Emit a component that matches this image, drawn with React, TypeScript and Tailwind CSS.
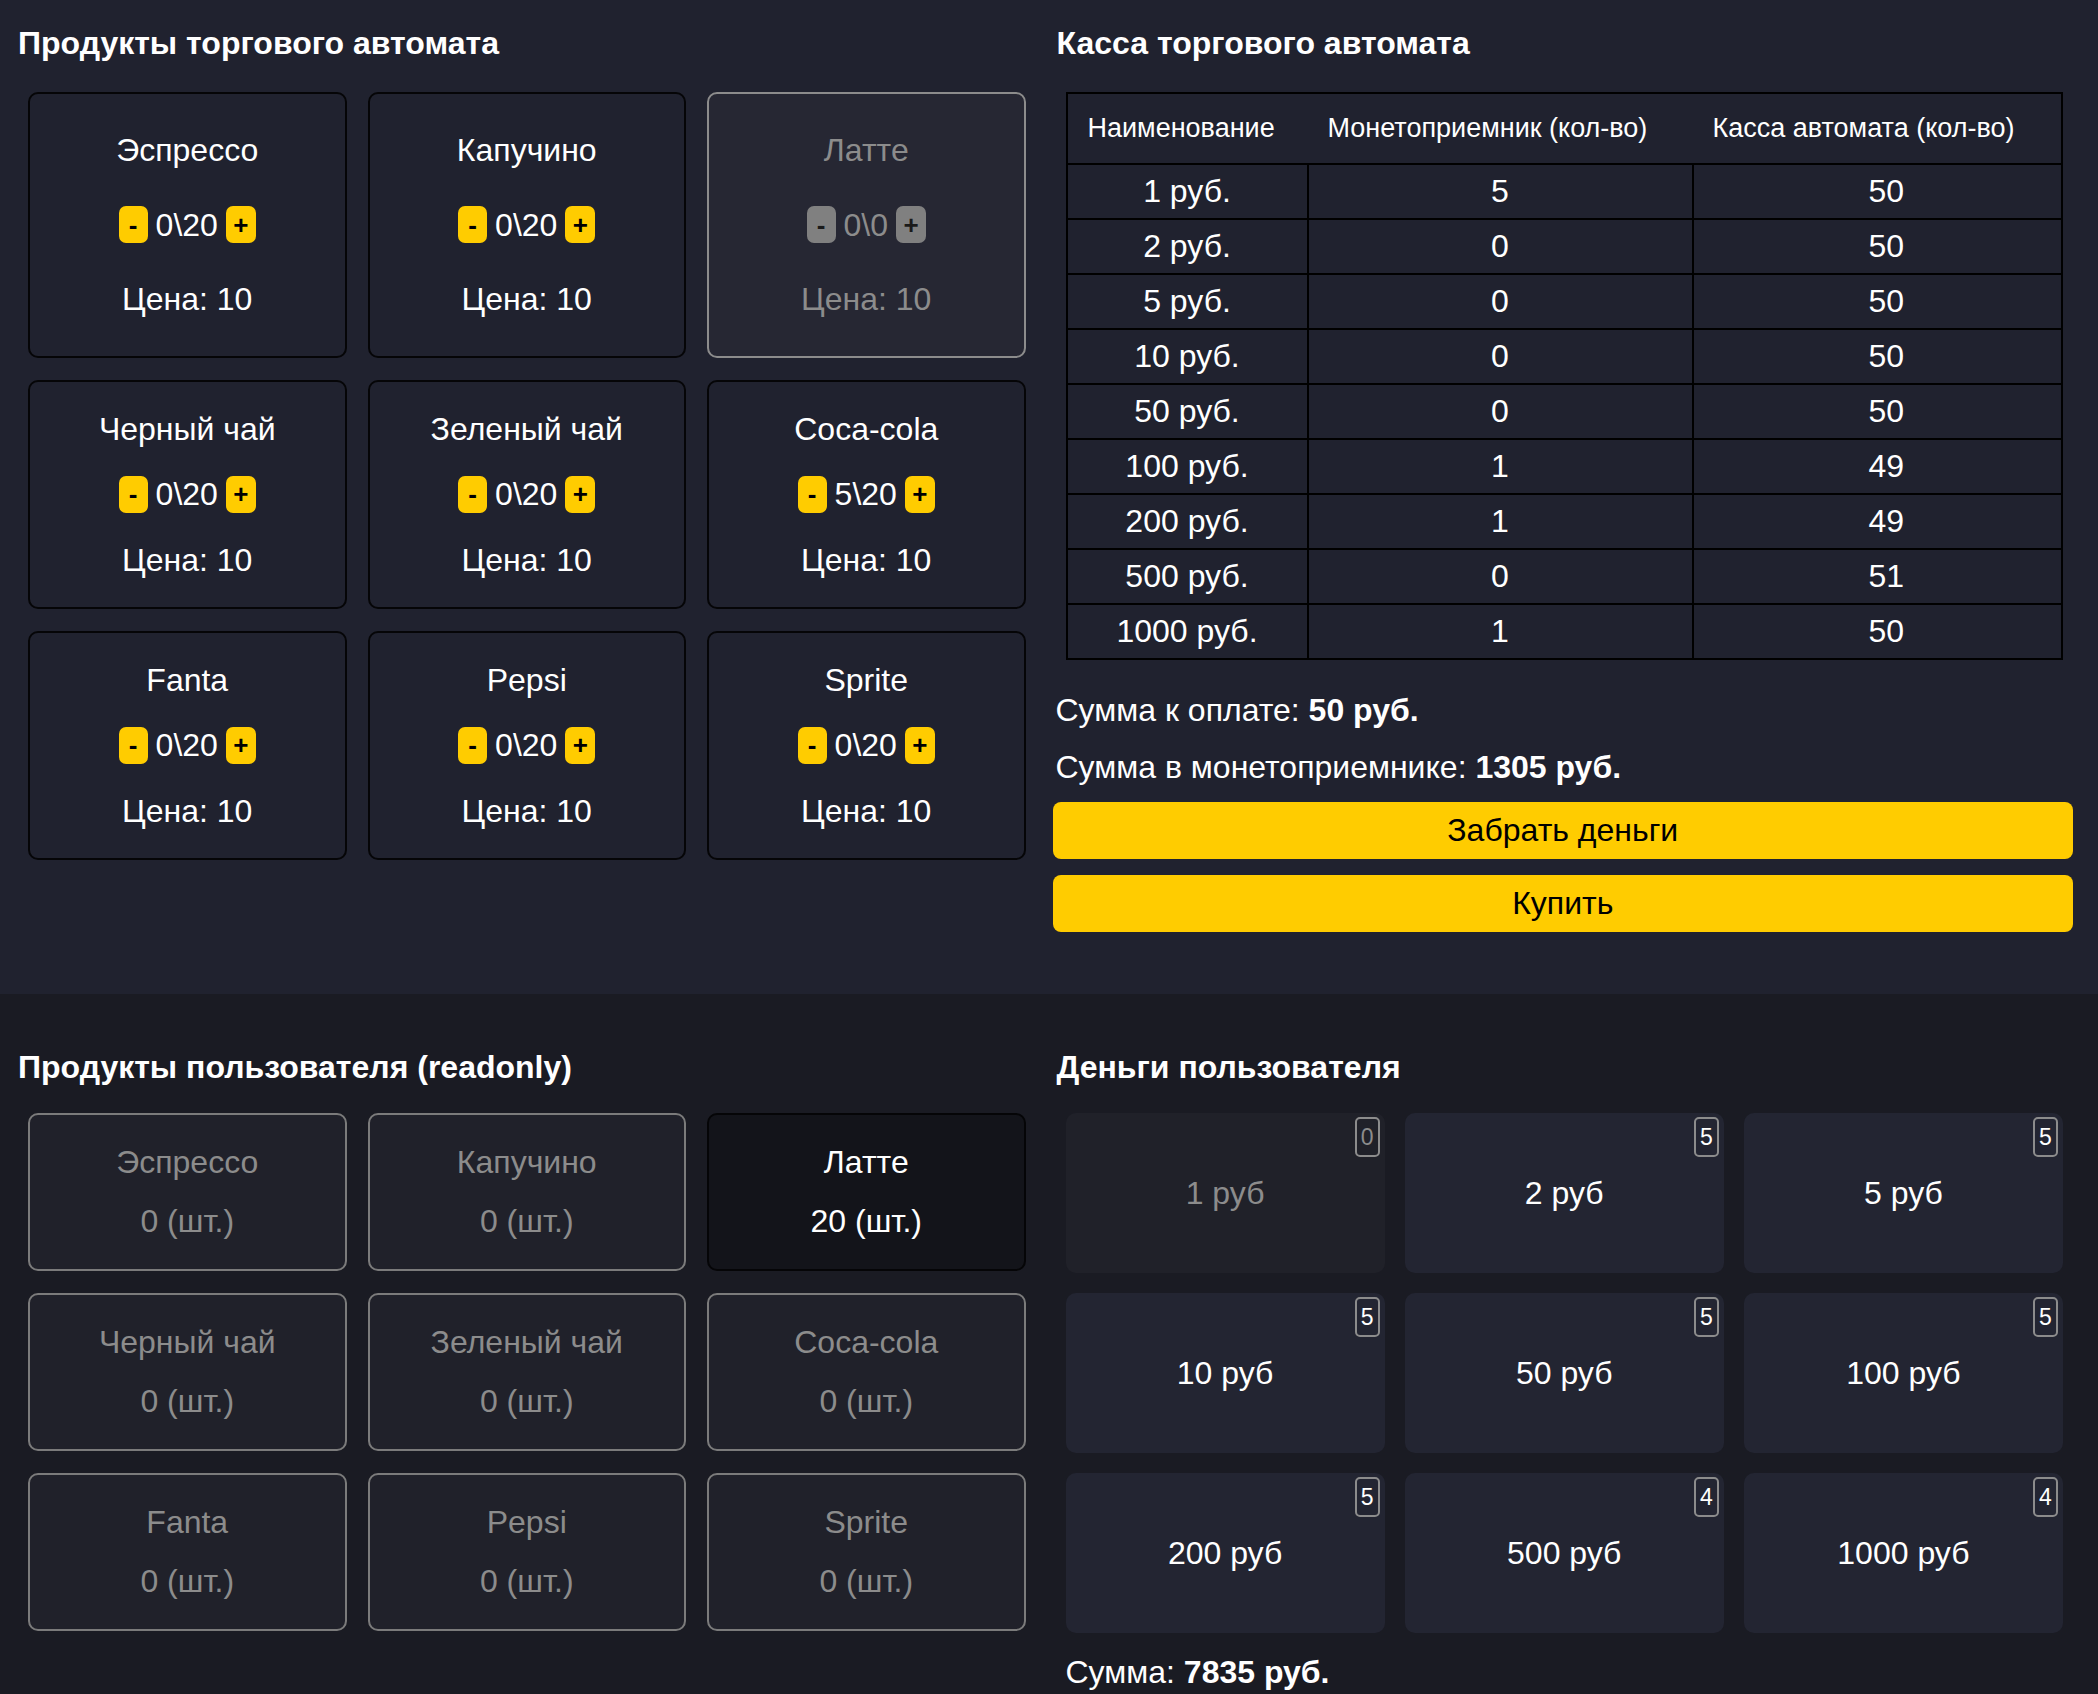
import React from 'react';

type Product = { name: string; count: number; max: number; price: number; owned: number };

const products: Product[] = [
  { name: 'Эспрессо', count: 0, max: 20, price: 10, owned: 0 },
  { name: 'Капучино', count: 0, max: 20, price: 10, owned: 0 },
  { name: 'Латте', count: 0, max: 0, price: 10, owned: 20 },
  { name: 'Черный чай', count: 0, max: 20, price: 10, owned: 0 },
  { name: 'Зеленый чай', count: 0, max: 20, price: 10, owned: 0 },
  { name: 'Coca-cola', count: 5, max: 20, price: 10, owned: 0 },
  { name: 'Fanta', count: 0, max: 20, price: 10, owned: 0 },
  { name: 'Pepsi', count: 0, max: 20, price: 10, owned: 0 },
  { name: 'Sprite', count: 0, max: 20, price: 10, owned: 0 },
];

const cash = [
  { label: '1 руб.', acceptor: 5, box: 50 },
  { label: '2 руб.', acceptor: 0, box: 50 },
  { label: '5 руб.', acceptor: 0, box: 50 },
  { label: '10 руб.', acceptor: 0, box: 50 },
  { label: '50 руб.', acceptor: 0, box: 50 },
  { label: '100 руб.', acceptor: 1, box: 49 },
  { label: '200 руб.', acceptor: 1, box: 49 },
  { label: '500 руб.', acceptor: 0, box: 51 },
  { label: '1000 руб.', acceptor: 1, box: 50 },
];

const wallet = [
  { value: 1, count: 0 },
  { value: 2, count: 5 },
  { value: 5, count: 5 },
  { value: 10, count: 5 },
  { value: 50, count: 5 },
  { value: 100, count: 5 },
  { value: 200, count: 5 },
  { value: 500, count: 4 },
  { value: 1000, count: 4 },
];

const ProductCard = ({ p, index }: { p: Product; index: number }) => {
  const disabled = p.max === 0;
  const height = index < 3 ? 'h-[266px]' : 'h-[229px]';
  const btn = disabled ? 'bg-[#808080] text-[#1a1a1a]' : 'bg-[#ffcc00] text-black';
  return (
    <div
      className={`${height} flex flex-col items-center justify-evenly rounded-[10px] border-2 ${
        disabled ? 'bg-[#262733] border-[#8c8c8c] text-[#8c8c8c]' : 'bg-[#20222f] border-[#050507] text-white'
      }`}
    >
      <span>{p.name}</span>
      <div className="flex items-center gap-[8px]">
        <button className={`w-[29px] h-[37px] rounded-[7px] text-[26px] font-bold leading-none flex items-center justify-center ${btn}`}>
          -
        </button>
        <span>
          {p.count}\{p.max}
        </span>
        <button className={`w-[30px] h-[37px] rounded-[7px] text-[26px] font-bold leading-none flex items-center justify-center ${btn}`}>
          +
        </button>
      </div>
      <span>Цена: {p.price}</span>
    </div>
  );
};

const App = () => {
  return (
    <div className="min-h-screen bg-[#1a1b23] text-white text-[32px] leading-[1.15] font-['Liberation_Sans',Arial,sans-serif]">
      {/* автомат */}
      <section className="bg-[#20222f] flex gap-[20px] pl-[18px] pr-[25px] pt-[25px] pb-[62px]">
        <div className="flex-1">
          <h2 className="text-[32px] leading-[36px] font-bold">Продукты торгового автомата</h2>
          <div className="grid grid-cols-3 gap-x-[21px] gap-y-[22px] px-[10px] mt-[31px]">
            {products.map((p, i) => (
              <ProductCard key={p.name} p={p} index={i} />
            ))}
          </div>
        </div>

        <div className="flex-1">
          <h2 className="text-[32px] leading-[36px] font-bold ml-[1px]">Касса торгового автомата</h2>
          <div className="px-[10px] mt-[31px]">
            <table className="w-full border-collapse border-2 border-black">
              <thead>
                <tr className="h-[71px] border-b-2 border-black">
                  <th className="w-[241px] text-left font-normal text-[27px] pl-[20px]">Наименование</th>
                  <th className="w-[385px] text-left font-normal text-[27px] pl-[20px]">Монетоприемник (кол-во)</th>
                  <th className="text-left font-normal text-[27px] pl-[20px]">Касса автомата (кол-во)</th>
                </tr>
              </thead>
              <tbody>
                {cash.map((c) => (
                  <tr key={c.label} className="h-[55px] border-b-2 border-black">
                    <td className="text-center border-r-2 border-black">{c.label}</td>
                    <td className="text-center border-r-2 border-black">{c.acceptor}</td>
                    <td className="text-center pl-[18px]">{c.box}</td>
                  </tr>
                ))}
              </tbody>
            </table>
          </div>
          <p className="mt-[32px] leading-[36px]">
            Сумма к оплате: <b>50 руб.</b>
          </p>
          <p className="mt-[21px] leading-[36px]">
            Сумма в монетоприемнике: <b>1305 руб.</b>
          </p>
          <div className="flex flex-col gap-[16px] mt-[17px] -ml-[3px]">
            <button className="h-[57px] rounded-[8px] bg-[#ffcc00] text-black">Забрать деньги</button>
            <button className="h-[57px] rounded-[8px] bg-[#ffcc00] text-black">Купить</button>
          </div>
        </div>
      </section>

      {/* пользователь */}
      <section className="flex gap-[20px] pl-[18px] pr-[25px] pt-[55px] pb-[40px]">
        <div className="flex-1">
          <h2 className="text-[32px] leading-[36px] font-bold">Продукты пользователя (readonly)</h2>
          <div className="grid grid-cols-3 gap-x-[21px] gap-y-[22px] px-[10px] mt-[28px]">
            {products.map((p) => {
              const active = p.owned > 0;
              return (
                <div
                  key={p.name}
                  className={`h-[158px] flex flex-col items-center justify-center gap-[22px] rounded-[10px] border-2 ${
                    active ? 'bg-[#13141a] border-[#050507] text-white' : 'bg-[#20212a] border-[#7b7b7b] text-[#8c8c8c]'
                  }`}
                >
                  <span>{p.name}</span>
                  <span>{p.owned} (шт.)</span>
                </div>
              );
            })}
          </div>
        </div>

        <div className="flex-1">
          <h2 className="text-[32px] leading-[36px] font-bold ml-[1px]">Деньги пользователя</h2>
          <div className="grid grid-cols-3 gap-[20px] px-[10px] mt-[28px]">
            {wallet.map((w) => {
              const empty = w.count === 0;
              return (
                <div
                  key={w.value}
                  className={`relative h-[160px] flex items-center justify-center rounded-[10px] ${
                    empty ? 'bg-[#202129] text-[#8c8c8c]' : 'bg-[#232532] text-white'
                  }`}
                >
                  <span>{w.value} руб</span>
                  <span className="absolute top-[4px] right-[5px] w-[25px] h-[40px] flex items-center justify-center rounded-[5px] border-2 border-[#8c8c8c] text-[23px]">
                    {w.count}
                  </span>
                </div>
              );
            })}
          </div>
          <p className="mt-[21px] ml-[10px] leading-[36px]">
            Сумма: <b>7835 руб.</b>
          </p>
        </div>
      </section>
    </div>
  );
};

export default App;
